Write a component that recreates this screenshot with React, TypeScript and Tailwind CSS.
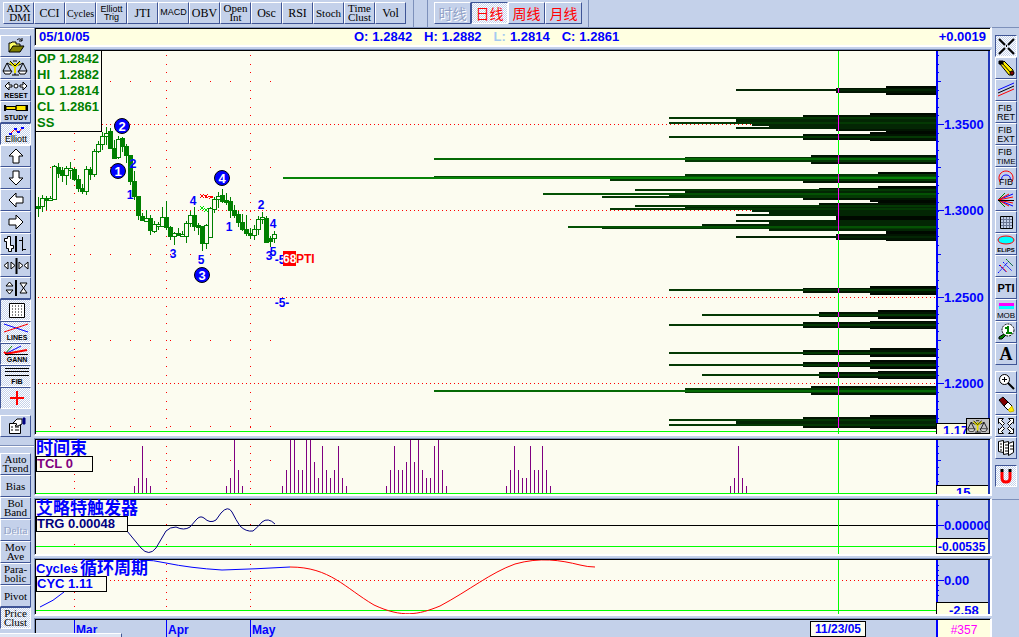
import type { ReactNode } from "react";
import clsx from "clsx";

type Candle = [x: number, high: number, low: number, top: number, bottom: number, down: 0 | 1];
type Bar = [x: number, top: number, bottom: number, color: string];

const candles: Candle[] = [
  [38, 197, 217, 206, 208, 1], [42, 195, 212, 198, 206, 0], [46, 196, 210, 198, 200, 1],
  [50, 196, 200, 198, 200, 0], [54, 165, 200, 166, 199, 0], [58, 163, 178, 167, 173, 1],
  [62, 167, 182, 170, 175, 1], [66, 166, 185, 168, 175, 0], [70, 162, 179, 168, 170, 0],
  [74, 168, 181, 169, 179, 1], [78, 175, 192, 179, 188, 1], [82, 184, 194, 188, 191, 1],
  [86, 166, 195, 169, 191, 0], [90, 167, 180, 169, 174, 1], [94, 149, 177, 151, 174, 0],
  [98, 141, 153, 144, 151, 0], [102, 132, 150, 136, 144, 0], [106, 127, 145, 133, 136, 0],
  [110, 128, 149, 131, 148, 1], [114, 140, 158, 148, 158, 1], [118, 136, 159, 139, 157, 0],
  [122, 137, 152, 138, 146, 1], [126, 144, 163, 146, 155, 1], [130, 155, 185, 155, 181, 1],
  [134, 171, 200, 181, 196, 1], [138, 196, 220, 196, 215, 1], [142, 213, 220, 216, 220, 1],
  [146, 210, 222, 218, 221, 0], [150, 215, 235, 218, 230, 1], [154, 221, 233, 224, 231, 0],
  [158, 222, 230, 224, 226, 0], [162, 207, 227, 217, 226, 0], [166, 201, 230, 217, 227, 1],
  [170, 226, 240, 227, 236, 1], [174, 232, 245, 233, 236, 0], [178, 228, 236, 233, 235, 1],
  [182, 231, 237, 234, 236, 0], [186, 221, 243, 223, 236, 0], [190, 211, 227, 215, 223, 0],
  [194, 207, 231, 215, 226, 1], [198, 223, 235, 225, 227, 1], [202, 226, 251, 226, 243, 1],
  [206, 224, 249, 225, 243, 0], [210, 207, 238, 208, 237, 0], [214, 197, 213, 199, 209, 0],
  [218, 192, 208, 196, 199, 0], [222, 189, 203, 195, 201, 1], [226, 193, 205, 200, 202, 1],
  [230, 197, 218, 201, 210, 1], [234, 205, 218, 210, 215, 1], [238, 211, 227, 214, 222, 1],
  [242, 214, 231, 222, 229, 1], [246, 215, 236, 229, 233, 1], [250, 228, 239, 233, 235, 1],
  [254, 225, 240, 229, 235, 0], [258, 216, 235, 219, 229, 0], [262, 212, 224, 217, 219, 0],
  [266, 216, 243, 218, 242, 1], [270, 236, 247, 238, 241, 1], [274, 231, 243, 234, 238, 0],
];

const BLACK = "#000900";
const DEEP = "#021602";
const DARK = "#032604";
const MOSS = "#043904";
const LEAF = "#045204";
const GREEN = "#056a05";

const bars: Bar[] = [
  [886, 86, 95, BLACK], [836, 88, 93, DEEP], [736, 89, 91, DARK],
  [870, 113, 130, BLACK], [886, 130, 132, BLACK], [803, 115, 129, DEEP], [836, 129, 131, DEEP],
  [736, 119, 122, DARK], [752, 122, 126, DARK], [769, 126, 127, DARK], [736, 127, 129, DARK],
  [669, 117, 119, MOSS], [669, 122, 124, MOSS],
  [870, 132, 141, BLACK], [803, 134, 140, DEEP], [669, 136, 138, MOSS],
  [811, 155, 164, DEEP], [685, 157, 162, MOSS], [434, 158, 160, GREEN],
  [878, 172, 174, BLACK], [803, 181, 183, DEEP], [685, 174, 178, MOSS], [610, 178, 181, MOSS],
  [434, 176, 178, LEAF], [283, 177, 179, "#078307"],
  [878, 186, 200, BLACK], [870, 200, 202, BLACK], [819, 188, 200, DEEP], [803, 198, 200, DEEP],
  [685, 191, 195, DARK], [669, 195, 197, MOSS], [635, 189, 191, MOSS], [602, 196, 198, MOSS],
  [543, 193, 195, LEAF],
  [878, 202, 212, BLACK], [819, 203, 212, DEEP], [836, 215, 224, BLACK], [752, 210, 212, DARK],
  [769, 212, 215, DARK], [685, 206, 209, DARK], [635, 205, 207, MOSS], [610, 208, 210, MOSS],
  [769, 222, 231, DARK], [769, 214, 216, DARK], [736, 214, 216, DARK], [736, 220, 222, DARK],
  [702, 224, 226, DARK], [602, 227, 229, MOSS], [568, 226, 228, LEAF],
  [886, 231, 241, BLACK], [836, 234, 240, DEEP], [736, 236, 238, DARK],
  [870, 286, 295, BLACK], [803, 288, 293, DEEP], [669, 289, 291, MOSS],
  [878, 310, 319, BLACK], [819, 312, 317, DEEP], [702, 314, 316, MOSS],
  [870, 321, 329, BLACK], [803, 322, 328, DEEP], [669, 324, 326, MOSS],
  [870, 348, 357, BLACK], [803, 350, 355, DEEP], [669, 352, 354, MOSS],
  [870, 360, 369, BLACK], [803, 362, 367, DEEP], [669, 364, 366, MOSS],
  [878, 371, 379, BLACK], [819, 372, 378, DEEP], [702, 374, 376, MOSS],
  [811, 386, 395, DEEP], [685, 388, 393, MOSS], [434, 390, 392, GREEN],
  [870, 415, 429, BLACK], [803, 417, 428, DEEP], [736, 421, 424, DARK],
  [669, 419, 421, MOSS], [669, 424, 426, MOSS],
];

const crossings = [
  [88, 93], [115, 131], [134, 140], [155, 164], [174, 183], [188, 200], [203, 231], [234, 240],
  [288, 293], [312, 317], [322, 328], [350, 355], [362, 367], [372, 378], [386, 395], [417, 428],
];

const waveLabels: [string, number, number][] = [
  ["2", 133, 168], ["1", 130, 199], ["4", 193, 205], ["3", 173, 258], ["5", 201, 264],
  ["1", 229, 231], ["2", 261, 209], ["4", 273, 228], ["5", 273, 256], ["3", 269, 260],
  ["-5-", 282, 264], ["-5-", 282, 307],
];

const waveCircles: [string, number, number][] = [
  ["2", 122, 126], ["1", 118, 171], ["4", 222, 178], ["3", 202, 275],
];

const clusters: [number, number][] = [
  [134, 486], [138, 478], [142, 446], [146, 478], [150, 486],
  [226, 486], [230, 478], [234, 440], [238, 470], [242, 486],
  [282, 486], [286, 470], [290, 440], [294, 440], [298, 470], [302, 470], [306, 440], [310, 440],
  [314, 462], [318, 478], [322, 446], [326, 470], [330, 478], [334, 470], [338, 446], [342, 478],
  [346, 486], [386, 486], [390, 470], [394, 446], [398, 470], [402, 470], [406, 462], [410, 440],
  [414, 462], [418, 440], [422, 470], [426, 478], [430, 478], [434, 446], [438, 440], [442, 470],
  [446, 486], [506, 486], [510, 470], [514, 446], [518, 470], [522, 478], [526, 478], [530, 446],
  [534, 470], [538, 470], [542, 446], [546, 470], [550, 486], [730, 486], [734, 478], [738, 446],
  [742, 478], [746, 486],
];

const indicators: { label: string; size: string }[] = [
  { label: "ADX\n DMI", size: "text-[11px] leading-[9px] whitespace-pre" },
  { label: "CCI", size: "text-[12px]" },
  { label: "Cycles", size: "text-[10px]" },
  { label: "Elliott\nTrig", size: "text-[9px] leading-[8px] whitespace-pre font-['Liberation_Sans',sans-serif]" },
  { label: "JTI", size: "text-[12px]" },
  { label: "MACD", size: "text-[9px] font-['Liberation_Sans',sans-serif]" },
  { label: "OBV", size: "text-[12px]" },
  { label: "Open\nInt", size: "text-[11px] leading-[9px] whitespace-pre" },
  { label: "Osc", size: "text-[12px]" },
  { label: "RSI", size: "text-[12px]" },
  { label: "Stoch", size: "text-[11px]" },
  { label: "Time\nClust", size: "text-[11px] leading-[9px] whitespace-pre" },
  { label: "Vol", size: "text-[12px]" },
];

const studies = ["Auto\nTrend", "Bias", "Bol\nBand", "Delta", "Mov\nAve", "Para-\nbolic", "Pivot", "Price\nClust"];

function ToolButton({
  label,
  pressed,
  disabled,
  className,
  children,
}: {
  label?: string;
  pressed?: boolean;
  disabled?: boolean;
  className?: string;
  children: ReactNode;
}) {
  return (
    <button
      type="button"
      aria-label={label}
      aria-pressed={pressed}
      disabled={disabled}
      className={clsx(
        "flex h-[22px] shrink-0 items-center justify-center overflow-hidden border",
        pressed
          ? "border-t-[#3f5596] border-r-white border-b-white border-l-[#3f5596] bg-[repeating-conic-gradient(#ffffff_0_25%,#c4d1ea_0_50%)] bg-[length:2px_2px]"
          : "border-t-white border-r-[#3f5596] border-b-[#3f5596] border-l-white bg-[#c4d1ea]",
        disabled && "text-[#93a3c8] [text-shadow:1px_1px_0_#ffffff]",
        className,
      )}
    >
      {children}
    </button>
  );
}

function Icon({ wide, children }: { wide?: boolean; children: ReactNode }) {
  return (
    <svg
      width={wide ? 28 : 20}
      height="20"
      viewBox={wide ? "0 0 28 20" : "0 0 20 20"}
      fill="none"
      stroke="#000"
      className="shrink-0"
      aria-hidden="true"
    >
      {children}
    </svg>
  );
}

function IconText({ x, y, size = 7, bold, children }: { x: number; y: number; size?: number; bold?: boolean; children: string }) {
  return (
    <text x={x} y={y} fontSize={size} fontWeight={bold ? 700 : 400} textAnchor="middle" fill="#000" stroke="none">
      {children}
    </text>
  );
}

const scales = (
  <g>
    <path d="M13 5v12M5 5l4 2h8l4-2M10 17h7" />
    <path d="M5 5L1 13M5 5l4 8M21 5l-4 8M21 5l4 8" />
    <path d="M1 13h9l-2 3H3zM16 13h9l-2 3h-5z" fill="#fff" />
    <path d="M13 5v10M8 4l5 5 5-5" stroke="#e8e000" strokeWidth="2" />
    <path d="M11 3h4M8 3l5 5 5-5" />
  </g>
);

const leftTools: { label: string; pressed?: boolean; icon: ReactNode }[] = [
  {
    label: "Open chart",
    icon: (
      <>
        <path d="M7 16V7h2l1-1h4v2h4v3" fill="#ffff66" />
        <path d="M7 16l4-6h11l-4 6z" fill="#808000" />
        <path d="M15 4c2-2 4-1 5 1m0-3v3h-3" />
      </>
    ),
  },
  { label: "Balance", icon: scales },
  {
    label: "Reset",
    icon: (
      <>
        <path d="M7 2L3 6l4 4V7h3V5H7zM21 2l4 4-4 4V7h-3V5h3z" fill="#fff" />
        <circle cx="14" cy="6" r="2" fill="#fff" />
        <IconText x={14} y={18} bold>RESET</IconText>
      </>
    ),
  },
  {
    label: "Study",
    icon: (
      <>
        <path d="M3 3v6M25 3v6" strokeWidth="2" />
        <path d="M4 4.500h10v3H4zM14 3.500h10v5H14z" fill="#ffe600" />
        <IconText x={14} y={18} bold>STUDY</IconText>
      </>
    ),
  },
  {
    label: "Elliott",
    pressed: true,
    icon: (
      <>
        <path d="M8 10l5-5 3 4 5-6" stroke="#ff0000" />
        <path d="M7 9h3v2H7zM12 4h3v2h-3zM15 7h3v2h-3zM19 3h3v2h-3z" fill="#0000ff" stroke="none" />
        <IconText x={14} y={18} size={9}>Elliott</IconText>
      </>
    ),
  },
  { label: "Scroll up", icon: <path d="M14 3l7 7h-4v7h-6v-7H7z" fill="#fff" /> },
  { label: "Scroll down", icon: <path d="M14 17l7-7h-4V3h-6v7H7z" fill="#fff" /> },
  { label: "Scroll left", icon: <path d="M7 10l7-7v4h7v6h-7v4z" fill="#fff" /> },
  { label: "Scroll right", icon: <path d="M21 10l-7-7v4H7v6h7v4z" fill="#fff" /> },
  {
    label: "Bar style",
    icon: (
      <>
        <path d="M2.500 4.500h3v-2h3v9h3v3h-2v3h-3v-3h-2v-7h-2z" fill="#fff" />
        <path d="M14 2v16" strokeWidth="2" />
        <path d="M20.500 3v14M21 6.500h-4M20 15.500h4" />
      </>
    ),
  },
  {
    label: "Horizontal spacing",
    icon: (
      <>
        <path d="M6 6v7l-4-3.500zM9 6v7l4-3.500zM17 6v7l4-3.500zM26 6v7l-4-3.500z" fill="#fff" />
        <path d="M14.500 2v16" strokeWidth="2" />
      </>
    ),
  },
  {
    label: "Vertical spacing",
    icon: (
      <>
        <path d="M4 8h7L7.500 4zM4 12h7l-3.500 4zM18 5h7l-3.500 5zM18 15h7l-3.500-5z" fill="#fff" />
        <path d="M14 2v16" strokeWidth="2" />
      </>
    ),
  },
  {
    label: "Grid",
    pressed: true,
    icon: (
      <>
        <path d="M7.500 3.500h15v14h-15z" fill="#fff" />
        <path d="M10 6h11M10 9h11M10 12h11M10 15h11" strokeDasharray="1 2" />
      </>
    ),
  },
  {
    label: "Lines",
    pressed: true,
    icon: (
      <>
        <path d="M2 2l24 8" stroke="#0000ff" />
        <path d="M2 10l24-8" stroke="#ff0000" />
        <IconText x={15} y={18} bold>LINES</IconText>
      </>
    ),
  },
  {
    label: "Gann",
    pressed: true,
    icon: (
      <>
        <path d="M3 10l7-8" stroke="#008000" />
        <path d="M3 10l16-8" stroke="#0000ff" />
        <path d="M3 10l22-4M2 8l4 3" stroke="#ff0000" strokeWidth="2" />
        <path d="M3 10.500h23" />
        <IconText x={15} y={18} bold>GANN</IconText>
      </>
    ),
  },
  {
    label: "Fibonacci",
    pressed: true,
    icon: (
      <>
        <path d="M3 2.500h24M3 5.500h24M3 9.500h24" />
        <IconText x={15} y={18} bold>FIB</IconText>
      </>
    ),
  },
  { label: "Crosshair", pressed: true, icon: <path d="M15 3v14M8 10h14" stroke="#ff0000" strokeWidth="2" /> },
];

const fibLabel = (second: string) => (
  <>
    <IconText x={9} y={9} size={9}>FIB</IconText>
    <IconText x={10} y={18} size={second.length > 3 ? 8 : 9}>{second}</IconText>
  </>
);

const drawTools: { label: string; pressed?: boolean; icon: ReactNode }[] = [
  {
    label: "Close tool",
    pressed: true,
    icon: <path d="M3 3l6 6M18 3l-6 6M3 18l6-6M18 18l-6-6M10 10h1" strokeWidth="2" />,
  },
  {
    label: "Pencil",
    icon: (
      <>
        <path d="M4 6l4-3 9 9v5h-4z" fill="#ffee00" />
        <path d="M6 5l9 10" />
        <path d="M3 3h4v3H3z" fill="#000" />
        <circle cx="16" cy="15" r="2" fill="#800000" />
      </>
    ),
  },
  {
    label: "Parallel lines",
    icon: (
      <>
        <path d="M2 10L18 3" stroke="#0000ff" />
        <path d="M2 13l16-7" />
        <path d="M2 16l16-7" stroke="#ff0000" />
      </>
    ),
  },
  { label: "Fibonacci retracement", icon: fibLabel("RET") },
  { label: "Fibonacci extension", icon: fibLabel("EXT") },
  { label: "Fibonacci time", icon: fibLabel("TIME") },
  {
    label: "Fibonacci arcs",
    icon: (
      <>
        <path d="M4 14C1 8 5 3 10 3s9 5 6 11" stroke="#ff0000" />
        <path d="M6 12c-1-3 1-5 4-5s5 2 4 5" stroke="#0000ff" />
        <IconText x={10} y={17} size={9}>FIB</IconText>
      </>
    ),
  },
  {
    label: "Fan lines",
    icon: (
      <>
        <path d="M2 10l7-7M2 10l7 7" stroke="#008000" />
        <path d="M2 10l15-6M2 10l15 6" stroke="#0000ff" />
        <path d="M2 10l15-3M2 10l15 3M2 10l11-6M2 10l11 6" stroke="#ff0000" />
        <path d="M2 10.500h16" />
      </>
    ),
  },
  {
    label: "Grid box",
    icon: (
      <>
        <path d="M4.500 4.500h12v12h-12z" />
        <path d="M7.500 5v11M10.500 5v11M13.500 5v11M5 7.500h11M5 10.500h11M5 13.500h11" stroke="#6b7694" />
      </>
    ),
  },
  {
    label: "Ellipse",
    icon: (
      <>
        <ellipse cx="10" cy="6" rx="8" ry="4" fill="#00ffff" stroke="#ff0000" />
        <IconText x={10} y={18} size={6} bold>ELiPS</IconText>
      </>
    ),
  },
  {
    label: "Pitchfork",
    icon: (
      <>
        <path d="M10 3l7 7M7 6l9 9M3 9l7 7M2 17L13 5" stroke="#0000ff" strokeDasharray="2 1" />
        <path d="M10 3l7 7" stroke="#008000" strokeDasharray="2 1" />
        <path d="M4 9l7 7" stroke="#ff0000" strokeDasharray="2 1" />
      </>
    ),
  },
  { label: "Profit taking index", icon: <IconText x={10} y={14} size={11} bold>PTI</IconText> },
  {
    label: "Make or break",
    icon: (
      <>
        <path d="M3 3h15v3H3z" fill="#ff00ff" stroke="none" />
        <path d="M3 6h15v3H3z" fill="#00ffff" stroke="none" />
        <IconText x={10} y={18} size={8}>MOB</IconText>
      </>
    ),
  },
  {
    label: "Time search",
    icon: (
      <>
        <circle cx="12" cy="8" r="6" fill="#fff" strokeDasharray="2 1" />
        <path d="M12 4v8M9 6h4M10 11h6" stroke="#008000" strokeWidth="2" />
        <path d="M8 12l-5 3v2h3l4-4" fill="#008000" />
      </>
    ),
  },
  {
    label: "Text",
    icon: (
      <text x="10" y="16" fontSize="18" fontWeight="700" textAnchor="middle" fill="#000" stroke="none" className="font-['Liberation_Serif',serif]">
        A
      </text>
    ),
  },
];

const viewTools: { label: string; icon: ReactNode }[] = [
  {
    label: "Zoom in",
    icon: (
      <>
        <circle cx="8.500" cy="7.500" r="5" fill="#fff" />
        <path d="M6 7.500h5M8.500 5v5" />
        <path d="M12 11l6 6" strokeWidth="2" />
      </>
    ),
  },
  {
    label: "Erase",
    icon: (
      <>
        <path d="M3 6l4-3 5 5-4 4z" fill="#800000" />
        <path d="M8 12l4-4 4 4-4 4z" fill="#fff" />
        <path d="M12 16l4-4 2 5-4 1z" fill="#ffee00" stroke="#c8b400" />
      </>
    ),
  },
  {
    label: "Fit to window",
    icon: (
      <>
        <path d="M2.500 2.500h5l-2 2 3 3-2 2-3-3-1 1zM17.500 2.500h-5l2 2-3 3 2 2 3-3 1 1z" fill="#fff" />
        <path d="M2.500 17.500h5l-2-2 3-3-2-2-3 3-1-1zM17.500 17.500h-5l2-2-3-3 2-2 3 3 1-1z" fill="#fff" />
      </>
    ),
  },
  {
    label: "Copy pages",
    icon: (
      <>
        <path d="M2.500 3.500l5-1v12l-5-1zM7.500 4.500l5-1v12l-5 1zM12.500 5.500l5-2v11l-5 3z" fill="#fff" />
        <path d="M4 6h2M4 9h2M4 12h2M9 7h3M9 10h3M9 13h3M14 8h3M14 11h3" />
      </>
    ),
  },
];

function Panel({ className, children }: { className: string; children: ReactNode }) {
  return (
    <section className="mb-0.5 border-t border-r-2 border-b-2 border-l border-t-[#7d90ba] border-r-white border-b-white border-l-[#7d90ba]">
      <div className={clsx("relative flex border-t border-l border-black", className)}>{children}</div>
    </section>
  );
}

function Axis({ top, height, children }: { top: number; height: number; children: ReactNode }) {
  return (
    <svg
      width="54"
      height={height}
      className="shrink-0 border-r-2 border-[#2036b8] bg-[#c4d1ea] text-[13px] font-bold"
      fill="#0000ff"
      role="img"
      aria-label="Scale"
    >
      <g transform={`translate(-936 ${-top})`}>
        <rect x="936" y={top} width="2" height={height} />
        {children}
      </g>
    </svg>
  );
}

function Tick({ y, label }: { y: number; label: string }) {
  return (
    <g>
      <rect x="938" y={y} width="6" height="1" />
      <text x="944" y={y + 5}>{label}</text>
    </g>
  );
}

function Cursor({ top, height }: { top: number; height: number }) {
  return (
    <svg x="100%" overflow="visible">
      <rect x="-98" y="0" width="1" height={height} fill="#00ff00" />
      {top === 51 &&
        crossings.map(([from, to]) => (
          <rect key={from} x="-98" y={from - top} width="1" height={to - from} fill="#ff00ff" />
        ))}
    </svg>
  );
}

function PriceChart() {
  const months = [74, 166, 250];
  const halves = [81, 167, 254, 340, 426];
  return (
    <svg className="h-[383px] min-w-0 flex-1 bg-[#fcfcf0]" role="img" aria-label="Price chart with Elliott waves and price clusters">
      {[124, 210, 297, 383].map((y) => (
        <line key={y} x1="2" x2="100%" y1={y - 50.5} y2={y - 50.5} stroke="#ff0000" strokeDasharray="1 3" />
      ))}
      <rect x="0" y="380" width="100%" height="1" fill="#00ff00" />
      <svg x="100%" overflow="visible">
        <g transform="translate(-936 -51)">
          {bars.map(([x, top, bottom, color], i) => (
            <rect key={i} x={x} y={top} width={936 - x} height={bottom - top} fill={color} />
          ))}
        </g>
      </svg>
      <g transform="translate(-36 -51)">
        <g shapeRendering="crispEdges">
          {months.map((x) => (
            <line key={x} x1={x + 0.5} x2={x + 0.5} y1="55" y2="431" stroke="#ff0000" strokeDasharray="1 7.640" />
          ))}
          {halves.map((y) => (
            <line key={y} x1="50" x2="272" y1={y + 0.5} y2={y + 0.5} stroke="#ff0000" strokeDasharray="1 19" />
          ))}
          {candles.map(([x, high, low, top, bottom, down]) => (
            <g key={x}>
              <rect x={x} y={high} width="1" height={low - high} fill="#008000" />
              <rect x={x - 2} y={top} width="5" height={bottom - top + 1} fill="#008000" />
              {!down && bottom - top > 1 && (
                <rect x={x - 1} y={top + 1} width="3" height={bottom - top - 1} fill="#fcfcf0" />
              )}
            </g>
          ))}
          <path d="M200 194l4 4m0-4l-4 4m4-3l4 3m0-4l-3 4m3-2l5 2m0-2l-4 3" stroke="#ff0000" fill="none" />
          <path d="M200 206l4 4m0-4l-4 4m4-2l4 4m0-4l-4 4" stroke="#00e000" fill="none" />
        </g>
        {waveCircles.map(([n, x, y]) => (
          <g key={n}>
            <circle cx={x} cy={y} r="7.500" fill="#0000ff" stroke="#000" />
            <text x={x} y={y + 5} textAnchor="middle" fill="#fff" className="text-[13px] font-bold">{n}</text>
          </g>
        ))}
        {waveLabels.map(([n, x, y], i) => (
          <text key={i} x={x} y={y} textAnchor="middle" fill="#0000ff" className="text-[12px] font-bold">{n}</text>
        ))}
        <rect x="283" y="251" width="13" height="15" fill="#ff0000" />
        <text x="283" y="263" fill="#fff" className="text-[12px] font-bold">68</text>
        <text x="296" y="263" fill="#ff0000" className="text-[12px] font-bold">PTI</text>
      </g>
      <Cursor top={51} height={383} />
    </svg>
  );
}

export default function App() {
  const axisSteps = Array.from({ length: 43 }, (_, i) => Math.round(55 + i * 8.64));

  return (
    <div className="relative flex min-h-screen flex-col overflow-hidden bg-[#c4d1ea] font-['Liberation_Sans',Arial,'Noto_Sans_CJK_SC',sans-serif] text-black">
      <header className="flex h-[27px] shrink-0 font-['Liberation_Serif','Noto_Sans_CJK_SC',serif]">
        <div className="flex border-r border-[#7d90ba] pt-0.5 pr-[7px] pl-[3px]">
          {indicators.map(({ label, size }) => (
            <ToolButton key={label} className={clsx("w-[31px]", size)}>{label}</ToolButton>
          ))}
        </div>
        <div className="ml-[13px] flex border-x border-x-[#7d90ba] px-1.5 pt-0.5 font-['Noto_Sans_CJK_SC',sans-serif] text-[14px] leading-none text-[#ff0000]">
          <ToolButton disabled className="w-[37px]">时线</ToolButton>
          <ToolButton pressed className="w-[37px]">日线</ToolButton>
          <ToolButton className="w-[37px]">周线</ToolButton>
          <ToolButton className="w-[37px]">月线</ToolButton>
        </div>
      </header>

      <div className="flex flex-1">
        <aside className="w-[34px] shrink-0 border-t border-t-[#7d90ba]">
          <div className="border-t border-t-white border-b border-b-[#7d90ba] pt-1.5 pb-2">
            {leftTools.map(({ label, pressed, icon }) => (
              <ToolButton key={label} label={label} pressed={pressed} className="w-[31px]">
                <Icon wide>{icon}</Icon>
              </ToolButton>
            ))}
            <ToolButton label="Properties" className="mt-1.5 w-[31px]">
              <Icon wide>
                <path d="M7.500 7.500h11v10h-11z" fill="#fff" />
                <path d="M9 11h2M13 11h4M9 14h2M13 14h4" />
                <path d="M11 7l4-4h5v5l-4 2h-3l2-2z" fill="#fff" />
                <path d="M21 2h2v6h-2z" fill="#000080" stroke="#000080" />
              </Icon>
            </ToolButton>
          </div>
          <div className="border-t border-t-white pt-1.5 font-['Liberation_Serif',serif] text-[11px] leading-[9px] whitespace-pre">
            {studies.map((label) => (
              <ToolButton key={label} disabled={label === "Delta"} pressed={label.startsWith("Price")} className="w-[31px]">
                {label}
              </ToolButton>
            ))}
          </div>
        </aside>

        <main className="min-w-0 flex-1">
          <Panel className="h-[17px] items-center bg-[#ffffe1] pr-1 pl-[3px] text-[13px] font-bold text-[#0000ff]">
            <span className="flex-1">05/10/05</span>
            <dl className="mr-[52px] flex gap-3">
              <div className="flex gap-1"><dt>O:</dt><dd>1.2842</dd></div>
              <div className="flex gap-1"><dt>H:</dt><dd>1.2882</dd></div>
              <div className="flex gap-1"><dt className="text-[#a6caf0]">L:</dt><dd>1.2814</dd></div>
              <div className="flex gap-1"><dt>C:</dt><dd>1.2861</dd></div>
            </dl>
            <span className="flex-1 text-right">+0.0019</span>
          </Panel>

          <Panel className="h-[384px]">
            <PriceChart />
            <dl className="absolute top-0 left-0 w-[66px] border-r border-b border-black bg-[#fcfcf0] pl-px text-[13px] leading-4 font-bold text-[#008000]">
              <div className="flex justify-between pr-0.5"><dt>OP</dt><dd>1.2842</dd></div>
              <div className="flex justify-between pr-0.5"><dt>HI</dt><dd>1.2882</dd></div>
              <div className="flex justify-between pr-0.5"><dt>LO</dt><dd>1.2814</dd></div>
              <div className="flex justify-between pr-0.5"><dt>CL</dt><dd>1.2861</dd></div>
              <div className="flex justify-between pr-0.5"><dt>SS</dt><dd /></div>
            </dl>
            <Axis top={51} height={383}>
              {axisSteps.map((y) => <rect key={y} x="938" y={y} width="1" height="1" />)}
              {[81, 167, 254, 340].map((y) => <rect key={y} x="938" y={y} width="3" height="1" />)}
              <Tick y={124} label="1.3500" />
              <Tick y={210} label="1.3000" />
              <Tick y={297} label="1.2500" />
              <Tick y={383} label="1.2000" />
              <rect x="936.500" y="423.500" width="54" height="12" fill="#ffffe1" stroke="#000" />
              <text x="943" y="435">1.17</text>
            </Axis>
            <button type="button" aria-label="Rescale" className="absolute right-0 bottom-0 h-4 w-6 overflow-hidden border border-black bg-[#c0c0c0]">
              <svg width="22" height="14" viewBox="0 1 27 17" fill="none" stroke="#000" aria-hidden="true">{scales}</svg>
            </button>
          </Panel>

          <Panel className="h-[55px]">
            <svg className="h-[54px] min-w-0 flex-1 bg-[#fcfcf0]" role="img" aria-label="Time clusters">
              <rect x="0" y="53" width="100%" height="1" fill="#00ff00" />
              <g transform="translate(-36 -440)" shapeRendering="crispEdges">
                {[74, 166, 250].map((x) => (
                  <line key={x} x1={x + 0.5} x2={x + 0.5} y1="446" y2="493" stroke="#ff0000" strokeDasharray="1 6" />
                ))}
                <line x1="110" x2="272" y1="460.500" y2="460.500" stroke="#ff0000" strokeDasharray="1 19" />
                {clusters.map(([x, y]) => (
                  <rect key={x} x={x} y={y} width="1" height={493 - y} fill="#800080" />
                ))}
              </g>
              <Cursor top={440} height={54} />
            </svg>
            <h2 className="absolute top-0 left-0 text-[17px] leading-[18px] font-bold text-[#0000ff]">时间束</h2>
            <p className="absolute top-4 left-0 w-[57px] border border-black bg-[#fcfcf0] text-[13px] leading-[14px] font-bold text-[#800080]">TCL 0</p>
            <Axis top={440} height={54}>
              {[446, 453, 467, 474, 481].map((y) => <rect key={y} x="938" y={y} width="1" height="1" />)}
              <rect x="938" y="460" width="3" height="1" />
              <rect x="936.500" y="485.500" width="54" height="12" fill="#ffffe1" stroke="#000" />
              <text x="956" y="497">15</text>
            </Axis>
          </Panel>

          <Panel className="h-[55px]">
            <svg className="h-[54px] min-w-0 flex-1 bg-[#fcfcf0]" role="img" aria-label="Elliott trigger">
              <rect x="0" y="46" width="100%" height="1" fill="#00ff00" />
              <rect x="90" y="25" width="100%" height="1" fill="#000" />
              <g transform="translate(-36 -500)" fill="none">
                {[74, 166, 250].map((x) => (
                  <line key={x} x1={x + 0.5} x2={x + 0.5} y1="504" y2="553" stroke="#ff0000" strokeDasharray="1 19" shapeRendering="crispEdges" />
                ))}
                <path d="M127 531l14 17q8 9 15 0l10-17q4-4 10-4 8 4 14 0l6-7q4-5 8-2 6 6 12 2l5-7q7-8 11-1 4 8 8 14 6 6 13 5 5-4 9-9 6-5 13 2" stroke="#000080" />
              </g>
              <Cursor top={500} height={54} />
            </svg>
            <h2 className="absolute top-0 left-0 text-[17px] leading-[18px] font-bold text-[#0000ff]">艾略特触发器</h2>
            <p className="absolute top-4 left-0 w-[92px] border border-black bg-[#fcfcf0] text-[13px] leading-[14px] font-bold text-[#000080]">TRG 0.00048</p>
            <Axis top={500} height={54}>
              <rect x="938" y="505" width="1" height="1" />
              <Tick y={525} label="0.00000" />
              <rect x="936.500" y="538.500" width="54" height="15" fill="#ffffe1" stroke="#000" />
              <text x="938" y="551" className="text-[12px]">-0.00535</text>
            </Axis>
          </Panel>

          <Panel className="h-[55px]">
            <svg className="h-[54px] min-w-0 flex-1 bg-[#fcfcf0]" role="img" aria-label="Cycles">
              <line x1="2" x2="100%" y1="20.500" y2="20.500" stroke="#ff0000" strokeDasharray="1 3" />
              <rect x="0" y="50" width="100%" height="1" fill="#00ff00" />
              <g transform="translate(-36 -560)" fill="none">
                {[74, 166, 250].map((x) => (
                  <line key={x} x1={x + 0.5} x2={x + 0.5} y1="564" y2="613" stroke="#ff0000" strokeDasharray="1 6" shapeRendering="crispEdges" />
                ))}
                <path d="M40 607q14-6 24-15M140 560q14 0 26 3 24 5 56 7 34-1 68-3" stroke="#0000ff" />
                <path d="M290 567C330 567 345 588 374 605C402 618 418 615 440 606C470 590 490 573 515 564C540 557 560 560 580 565Q588 567 595 567" stroke="#ff0000" />
              </g>
              <Cursor top={560} height={54} />
            </svg>
            <h2 className="absolute top-0 left-0 flex items-center gap-0.5 text-[13px] leading-[18px] font-bold text-[#0000ff]">
              Cycles <span className="text-[17px]">循环周期</span>
            </h2>
            <p className="absolute top-4 left-0 w-[71px] border border-black bg-[#fcfcf0] text-[13px] leading-[14px] font-bold text-[#0000ff]">CYC 1.11</p>
            <Axis top={560} height={54}>
              {[565, 570, 575, 585, 590, 595].map((y) => <rect key={y} x="938" y={y} width="1" height="1" />)}
              <Tick y={580} label="0.00" />
              <rect x="936.500" y="602.500" width="54" height="16" fill="#ffffe1" stroke="#000" />
              <text x="949" y="615">-2.58</text>
            </Axis>
          </Panel>

          <footer className="border-t border-r-2 border-l border-t-[#7d90ba] border-r-white border-l-[#7d90ba]">
            <div className="flex h-[18px] border-t border-l border-black text-[12px] leading-5 font-bold text-[#0000ff]">
              <span className="w-[38px]" />
              <span className="w-[92px] border-l border-[#0000ff] pl-px">Mar</span>
              <span className="w-[84px] border-l border-[#0000ff] pl-px">Apr</span>
              <span className="flex-1 border-l border-[#0000ff] pl-px">May</span>
              <time className="mt-px mr-[70px] h-4 w-14 border border-black bg-[#fcfcf0] text-center text-[12px] leading-[14px]">11/23/05</time>
              <span className="w-[54px] border-l-2 border-[#0000ff] bg-[#ffffe1] text-center font-normal text-[#ff00ff]">#357</span>
            </div>
          </footer>
        </main>

        <aside className="w-[27px] shrink-0">
          <div className="border-t border-b border-y-[#7d90ba] pt-[7px] pb-3 pl-[3px]">
            {drawTools.map(({ label, pressed, icon }) => (
              <ToolButton key={label} label={label} pressed={pressed} className="w-[22px]">
                <Icon>{icon}</Icon>
              </ToolButton>
            ))}
            <div className="my-1.5">
              {viewTools.map(({ label, icon }) => (
                <ToolButton key={label} label={label} className="w-[22px]">
                  <Icon>{icon}</Icon>
                </ToolButton>
              ))}
            </div>
            <ToolButton label="Magnet" pressed className="w-[22px]">
              <Icon>
                <path d="M6 6v6q0 4 4 4t4-4V6" stroke="#ff0000" strokeWidth="3" />
                <path d="M6 3v3M14 3v3" strokeWidth="3" />
              </Icon>
            </ToolButton>
          </div>
        </aside>
      </div>

      <div className="absolute bottom-0 left-0 h-1 w-[122px] border-t border-r border-t-white border-r-[#3f5596] bg-[#dfe6f3]" />
    </div>
  );
}
